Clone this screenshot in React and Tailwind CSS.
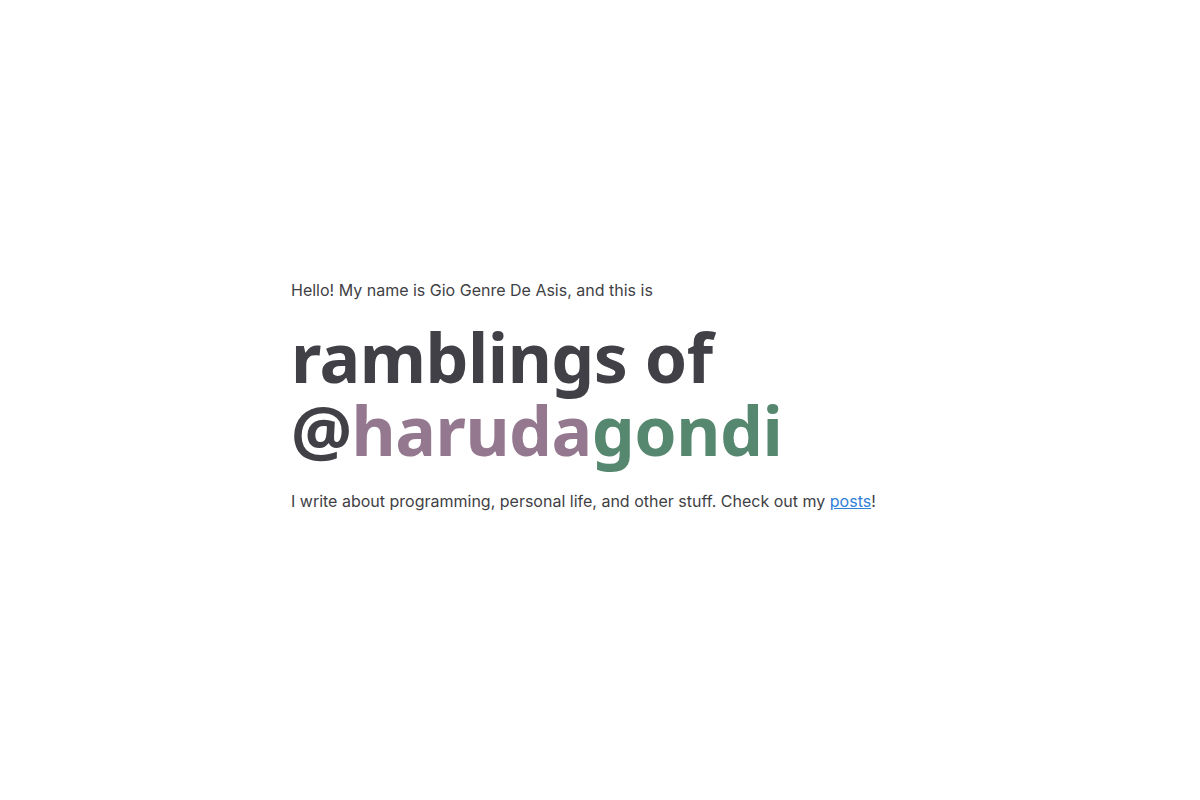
export default function App() {
  return (
    <div className="min-h-screen bg-white flex items-center justify-center pb-[10px] font-['Inter',sans-serif] text-[#3f3f46]">
      <div className="w-[618px]">
        <p className="text-base leading-6">Hello! My name is Gio Genre De Asis, and this is</p>
        <h1 className="mt-[18px] font-['Noto_Sans',sans-serif] font-bold text-[68px] leading-[73px] tracking-[-0.5px] text-[#404046]">
          ramblings of
          <br />
          @<span className="text-[#94788f]">haruda</span>
          <span className="text-[#56886f]">gondi</span>
        </h1>
        <p className="mt-[23px] text-base leading-6">
          I write about programming, personal life, and other stuff. Check out my{" "}
          <a href="#" className="text-[#2f7fd9] underline">posts</a>!
        </p>
      </div>
    </div>
  );
}
